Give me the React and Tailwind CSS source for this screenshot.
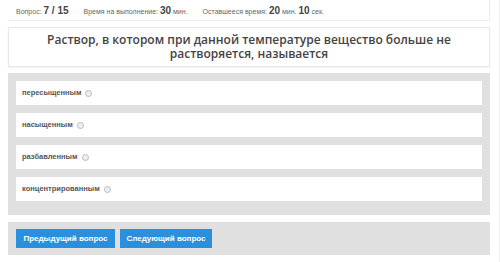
import React from 'react';

const options = ['пересыщенным', 'насыщенным', 'разбавленным', 'концентрированным'];

const App = () => {
  return (
    <div className="w-[500px] h-[262px] bg-white border-r border-[#eeeeee] pl-2 pr-[9px] font-['Liberation_Sans',sans-serif] text-[#555]">
      {/* верхняя строка */}
      <div className="h-[21px] flex items-center pl-2 border-r border-b border-[#ececec] text-[7px] text-[#666]">
        <span>
          Вопрос: <b className="text-[10px] text-[#444]">7 / 15</b>
        </span>
        <span className="ml-[15px]">
          Время на выполнение: <b className="text-[10px] text-[#444]">30</b> мин.
        </span>
        <span className="ml-[15px]">
          Оставшееся время: <b className="text-[10px] text-[#444]">20</b> мин. <b className="text-[10px] text-[#444]">10</b> сек.
        </span>
      </div>

      {/* вопрос */}
      <div className="mt-[6px] h-[40px] border border-[#e8e8e8] shadow-[0_1px_2px_rgba(0,0,0,0.06)] flex items-center justify-center text-center">
        <p className="font-['Open_Sans',sans-serif] font-semibold text-[12px] leading-[14px] text-[#444]">
          Раствор, в котором при данной температуре вещество больше не<br />растворяется, называется
        </p>
      </div>

      {/* варианты */}
      <div className="mt-[6px] bg-[#e0e0e0] p-2 pb-[14px] flex flex-col gap-2">
        {options.map(opt => (
          <div key={opt} className="h-[24px] bg-white flex items-center pl-[6px] text-[7.5px] font-bold text-[#555]">
            <span>{opt}</span>
            <span className="ml-[4px] w-[7px] h-[7px] rounded-full border border-[#bbb] bg-[#eee]"></span>
          </div>
        ))}
      </div>

      {/* кнопки */}
      <div className="mt-[7px] h-[33px] bg-[#e0e0e0] flex items-center pl-2 gap-[5px]">
        <button className="h-[19px] w-[99px] bg-[#2b8fdc] text-white text-[8px] font-bold">
          Предыдущий вопрос
        </button>
        <button className="h-[19px] w-[92px] bg-[#2b8fdc] text-white text-[8px] font-bold">
          Следующий вопрос
        </button>
      </div>
    </div>
  );
};

export default App;
